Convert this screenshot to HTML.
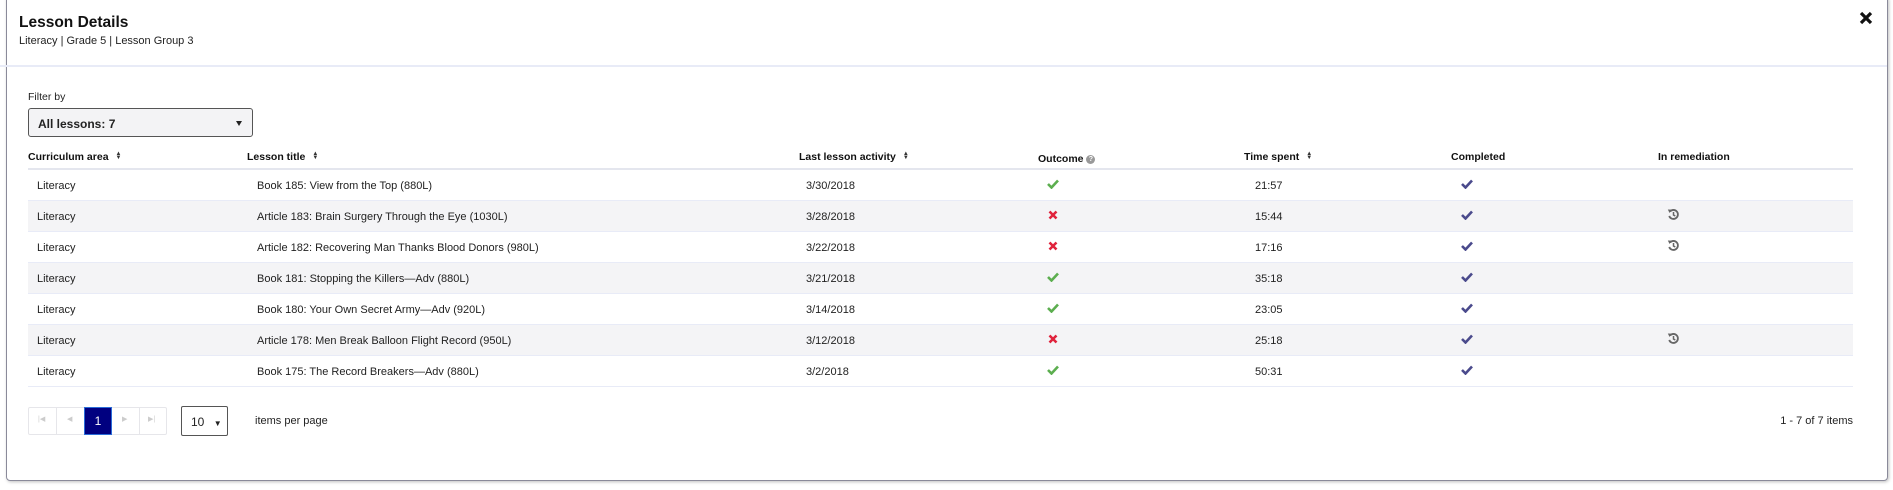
<!DOCTYPE html>
<html><head><meta charset="utf-8"><style>
*{box-sizing:border-box;margin:0;padding:0}
body{width:1893px;height:490px;background:#fff;font-family:"Liberation Sans",sans-serif;color:#222;position:relative;overflow:hidden}
.modal{position:absolute;left:6px;top:-4px;width:1882px;height:485px;border:1px solid #8a8a9a;border-radius:4px;box-shadow:1px 1px 3px rgba(0,0,0,.25)}
.abs{position:absolute;white-space:nowrap}
.h1{left:19px;top:14px;font-size:15.5px;font-weight:bold;color:#111}
.sub{left:19px;top:35px;font-size:11px;color:#222}
.sep{position:absolute;left:0;top:65px;width:1887px;height:2px;background:#e8ebf7}
.filt{left:28px;top:91px;font-size:10.5px}
.sel{position:absolute;left:28px;top:108px;width:225px;height:29px;border:1px solid #555;border-radius:3px;background:#f3f3f5;font-size:12px;font-weight:bold;padding:8px 9px}
.sel:after{content:"";position:absolute;right:10px;top:12px;border:3.5px solid transparent;border-top:5px solid #222}
.th{top:151px;font-size:10.5px;font-weight:bold;color:#111}
.sort{display:inline-block;margin-left:7px;font-size:6px;line-height:4px;vertical-align:middle;position:relative;top:-1px;color:#333}
.hl{position:absolute;left:28px;top:168px;width:1825px;height:2px;background:#e4e6ee}
.row{position:absolute;left:28px;width:1825px;height:31px;border-bottom:1px solid #e8ebf7}
.row.s{background:#f4f4f6}
.c{position:absolute;top:10px;font-size:11px;white-space:nowrap;color:#222}
svg{position:absolute}
.pg{position:absolute;top:407px;height:28px;border:1px solid #e6e6ea;border-radius:2px}
</style></head><body>
<div class="modal"></div>
<div class="abs h1">Lesson Details</div>
<div class="abs sub">Literacy | Grade 5 | Lesson Group 3</div>
<svg style="left:1859px;top:11px" width="14" height="14" viewBox="0 0 14 14"><path d="M2 2L12 12M12 2L2 12" stroke="#111" stroke-width="3.2"/></svg>
<div class="sep"></div>
<div class="abs filt">Filter by</div>
<div class="sel">All lessons: 7</div>

<div class="abs th" style="left:28px">Curriculum area<span class="sort">▲<br>▼</span></div>
<div class="abs th" style="left:247px">Lesson title<span class="sort">▲<br>▼</span></div>
<div class="abs th" style="left:799px">Last lesson activity<span class="sort">▲<br>▼</span></div>
<div class="abs th" style="left:1038px;top:153px">Outcome <span style="display:inline-block;width:9px;height:9px;border-radius:50%;background:#999;color:#fff;font-size:7px;text-align:center;line-height:9px;vertical-align:middle">?</span></div>
<div class="abs th" style="left:1244px">Time spent<span class="sort">▲<br>▼</span></div>
<div class="abs th" style="left:1451px">Completed</div>
<div class="abs th" style="left:1658px">In remediation</div>
<div class="hl"></div>

<div id="rows"></div>
<script>
var d=[["Book 185: View from the Top (880L)","3/30/2018",1,"21:57",0],
["Article 183: Brain Surgery Through the Eye (1030L)","3/28/2018",0,"15:44",1],
["Article 182: Recovering Man Thanks Blood Donors (980L)","3/22/2018",0,"17:16",1],
["Book 181: Stopping the Killers—Adv (880L)","3/21/2018",1,"35:18",0],
["Book 180: Your Own Secret Army—Adv (920L)","3/14/2018",1,"23:05",0],
["Article 178: Men Break Balloon Flight Record (950L)","3/12/2018",0,"25:18",1],
["Book 175: The Record Breakers—Adv (880L)","3/2/2018",1,"50:31",0]];
var h="";
d.forEach(function(r,i){
var top=170+i*31;
h+='<div class="row'+(i%2?' s':'')+'" style="top:'+top+'px">';
h+='<div class="c" style="left:9px">Literacy</div>';
h+='<div class="c" style="left:229px">'+r[0]+'</div>';
h+='<div class="c" style="left:778px">'+r[1]+'</div>';
h+='<div class="c" style="left:1227px">'+r[3]+'</div>';
if(r[2]) h+='<svg style="left:1019px;top:9px" width="12" height="10" viewBox="0 0 12 10"><path d="M1 5L4.5 8.5L11 1.5" fill="none" stroke="#5cae4f" stroke-width="2.6"/></svg>';
else h+='<svg style="left:1020px;top:9px" width="10" height="10" viewBox="0 0 10 10"><path d="M1.5 1.5L8.5 8.5M8.5 1.5L1.5 8.5" stroke="#e0233c" stroke-width="2.6"/></svg>';
h+='<svg style="left:1433px;top:9px" width="12" height="10" viewBox="0 0 12 10"><path d="M1 5L4.5 8.5L11 1.5" fill="none" stroke="#4a4a8c" stroke-width="2.6"/></svg>';
if(r[4]) h+='<svg style="left:1639px;top:7px" width="13" height="13" viewBox="0 0 13 13"><path d="M3 3.5A4.5 4.5 0 1 1 2.2 8" fill="none" stroke="#666" stroke-width="1.8"/><path d="M0.8 1.5L4.6 1.6L2.6 5z" fill="#666"/><path d="M6.5 4V7L8.3 8" fill="none" stroke="#666" stroke-width="1.5"/></svg>';
h+='</div>';
});
document.getElementById("rows").innerHTML=h;
</script>

<div class="pg" style="left:28px;width:139px"></div>
<div style="position:absolute;left:56px;top:407px;width:1px;height:28px;background:#e6e6ea"></div>
<div style="position:absolute;left:139px;top:407px;width:1px;height:28px;background:#e6e6ea"></div>
<div style="position:absolute;left:84px;top:407px;width:28px;height:28px;background:#000080;border:1px solid #2a6cd8;color:#fff;font-size:12px;text-align:center;line-height:26px">1</div>
<div class="abs" style="left:38px;top:415px;font-size:7px;color:#ccc">|◀</div>
<div class="abs" style="left:67px;top:415px;font-size:7px;color:#ccc">◀</div>
<div class="abs" style="left:122px;top:415px;font-size:7px;color:#ccc">▶</div>
<div class="abs" style="left:148px;top:415px;font-size:7px;color:#ccc">▶|</div>
<div style="position:absolute;left:181px;top:406px;width:47px;height:30px;border:1px solid #555;border-radius:2px;font-size:12px;padding:8px 0 0 9px">10 <span style="font-size:8px;margin-left:6px">▼</span></div>
<div class="abs" style="left:255px;top:415px;font-size:11px">items per page</div>
<div class="abs" style="right:40px;top:415px;font-size:11px">1 - 7 of 7 items</div>
</body></html>
